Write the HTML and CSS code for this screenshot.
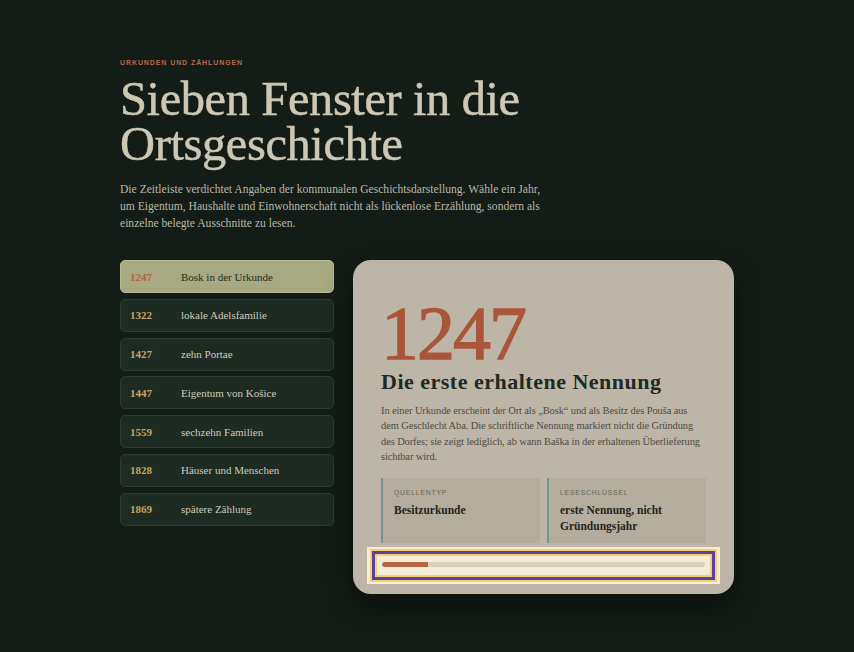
FILE: index.html
```html
<!DOCTYPE html>
<html lang="de">
<head>
<meta charset="utf-8">
<title>Sieben Fenster in die Ortsgeschichte</title>
<link rel="stylesheet" href="styles.css">
</head>
<body>
<main class="page">
  <header class="intro">
    <p class="eyebrow">Urkunden und Zählungen</p>
    <h1 class="title">Sieben Fenster in die Ortsgeschichte</h1>
    <p class="lead">Die Zeitleiste verdichtet Angaben der kommunalen Geschichtsdarstellung. Wähle ein Jahr, um Eigentum, Haushalte und Einwohnerschaft nicht als lückenlose Erzählung, sondern als einzelne belegte Ausschnitte zu lesen.</p>
  </header>
  <section class="explorer">
    <ul class="years">
      <li class="year-item active"><span class="yr">1247</span><span class="lbl">Bosk in der Urkunde</span></li>
      <li class="year-item"><span class="yr">1322</span><span class="lbl">lokale Adelsfamilie</span></li>
      <li class="year-item"><span class="yr">1427</span><span class="lbl">zehn Portae</span></li>
      <li class="year-item"><span class="yr">1447</span><span class="lbl">Eigentum von Košice</span></li>
      <li class="year-item"><span class="yr">1559</span><span class="lbl">sechzehn Familien</span></li>
      <li class="year-item"><span class="yr">1828</span><span class="lbl">Häuser und Menschen</span></li>
      <li class="year-item"><span class="yr">1869</span><span class="lbl">spätere Zählung</span></li>
    </ul>
    <article class="card">
      <div class="big-year">1247</div>
      <h2 class="card-title">Die erste erhaltene Nennung</h2>
      <p class="card-text">In einer Urkunde erscheint der Ort als „Bosk“ und als Besitz des Pouša aus dem Geschlecht Aba. Die schriftliche Nennung markiert nicht die Gründung des Dorfes; sie zeigt lediglich, ab wann Baška in der erhaltenen Überlieferung sichtbar wird.</p>
      <div class="facts">
        <div class="fact"><span class="fact-label">Quellentyp</span><span class="fact-value">Besitzurkunde</span></div>
        <div class="fact"><span class="fact-label">Leseschlüssel</span><span class="fact-value">erste Nennung, nicht Gründungsjahr</span></div>
      </div>
      <div class="meter-wrap">
        <div class="meter">
          <div class="track"><div class="fill" style="width:14.2%"></div></div>
        </div>
      </div>
    </article>
  </section>
</main>
</body>
</html>
```
FILE: styles.css
```css
* { box-sizing: border-box; }
html, body { margin: 0; padding: 0; }
body {
  background: #131c17;
  font-family: "Liberation Serif", "DejaVu Serif", serif;
  color: #cfcab8;
  min-height: 652px;
}
.page {
  width: 614px;
  margin-left: 120px;
  padding-top: 58px;
}
.eyebrow {
  margin: 0;
  font-family: "Liberation Sans", Arial, sans-serif;
  font-size: 7px;
  font-weight: 700;
  letter-spacing: 0.13em;
  text-transform: uppercase;
  color: #b9694a;
  line-height: 10px;
}
.title {
  margin: 8px 0 0;
  font-size: 48.5px;
  line-height: 45px;
  font-weight: 400;
  color: #cdc7b6;
  letter-spacing: -0.4px;
  -webkit-text-stroke: 0.5px #cdc7b6;
  width: 420px;
}
.lead {
  margin: 15px 0 0;
  width: 432px;
  font-size: 11.6px;
  line-height: 17px;
  color: #bcb8a8;
}
.explorer {
  margin-top: 28px;
  display: grid;
  grid-template-columns: 214px 381px;
  column-gap: 19px;
  align-items: start;
}
.years {
  list-style: none;
  margin: 0;
  padding: 0;
  display: flex;
  flex-direction: column;
  gap: 5.8px;
}
.year-item {
  height: 33px;
  display: flex;
  align-items: center;
  padding-left: 9px;
  border-radius: 5px;
  background: #1d2b23;
  border: 1px solid #2d3c33;
  font-size: 11px;
}
.year-item .yr {
  width: 51px;
  font-weight: 700;
  color: #c9a55e;
}
.year-item .lbl { color: #cfcab8; }
.year-item.active {
  background: #a6a982;
  border-color: #b6b992;
}
.year-item.active .yr { color: #b5644a; }
.year-item.active .lbl { color: #262e20; }
.card {
  height: 334px;
  background: #bdb6a8;
  border-radius: 18px;
  padding: 36px 28px 12px;
  box-shadow: 0 12px 30px rgba(0, 0, 0, 0.45);
  color: #4b493f;
  display: flex;
  flex-direction: column;
}
.big-year {
  font-size: 76px;
  line-height: 74px;
  color: #a9563a;
  letter-spacing: -2px;
  -webkit-text-stroke: 1.3px #a9563a;
}
.card-title {
  margin: 1px 0 0;
  font-size: 22px;
  line-height: 22px;
  font-weight: 700;
  letter-spacing: 0.5px;
  color: #1f2a22;
}
.card-text {
  margin: 10px 0 0;
  font-size: 10.5px;
  line-height: 15.3px;
  letter-spacing: -0.12px;
  color: #4d4b42;
}
.facts {
  margin-top: 14px;
  display: grid;
  grid-template-columns: 1fr 1fr;
  gap: 7px;
}
.fact {
  background: #b4ad9e;
  border-left: 2px solid #6b9895;
  padding: 10px 10px 9px 11px;
  display: flex;
  flex-direction: column;
  min-height: 62px;
}
.fact-label {
  font-family: "Liberation Sans", Arial, sans-serif;
  font-size: 6.8px;
  letter-spacing: 0.12em;
  text-transform: uppercase;
  color: #66655a;
  line-height: 9px;
}
.fact-value {
  margin-top: 5px;
  font-size: 11.5px;
  line-height: 16px;
  font-weight: 700;
  color: #1f241f;
}
.meter-wrap {
  margin: 4px -14px 0;
  background: #f4ecd7;
  padding: 4px 5px;
}
.meter {
  border: 3px solid #5a3fab;
  box-shadow: 0 0 0 2px #f5d06a, inset 0 0 0 2px #f5d06a;
  padding: 8px 7px 10px;
}
.track {
  height: 5px;
  border-radius: 3px;
  background: #dbd0bb;
  overflow: hidden;
}
.fill {
  height: 100%;
  background: #bb6444;
  border-radius: 3px 0 0 3px;
}
```
